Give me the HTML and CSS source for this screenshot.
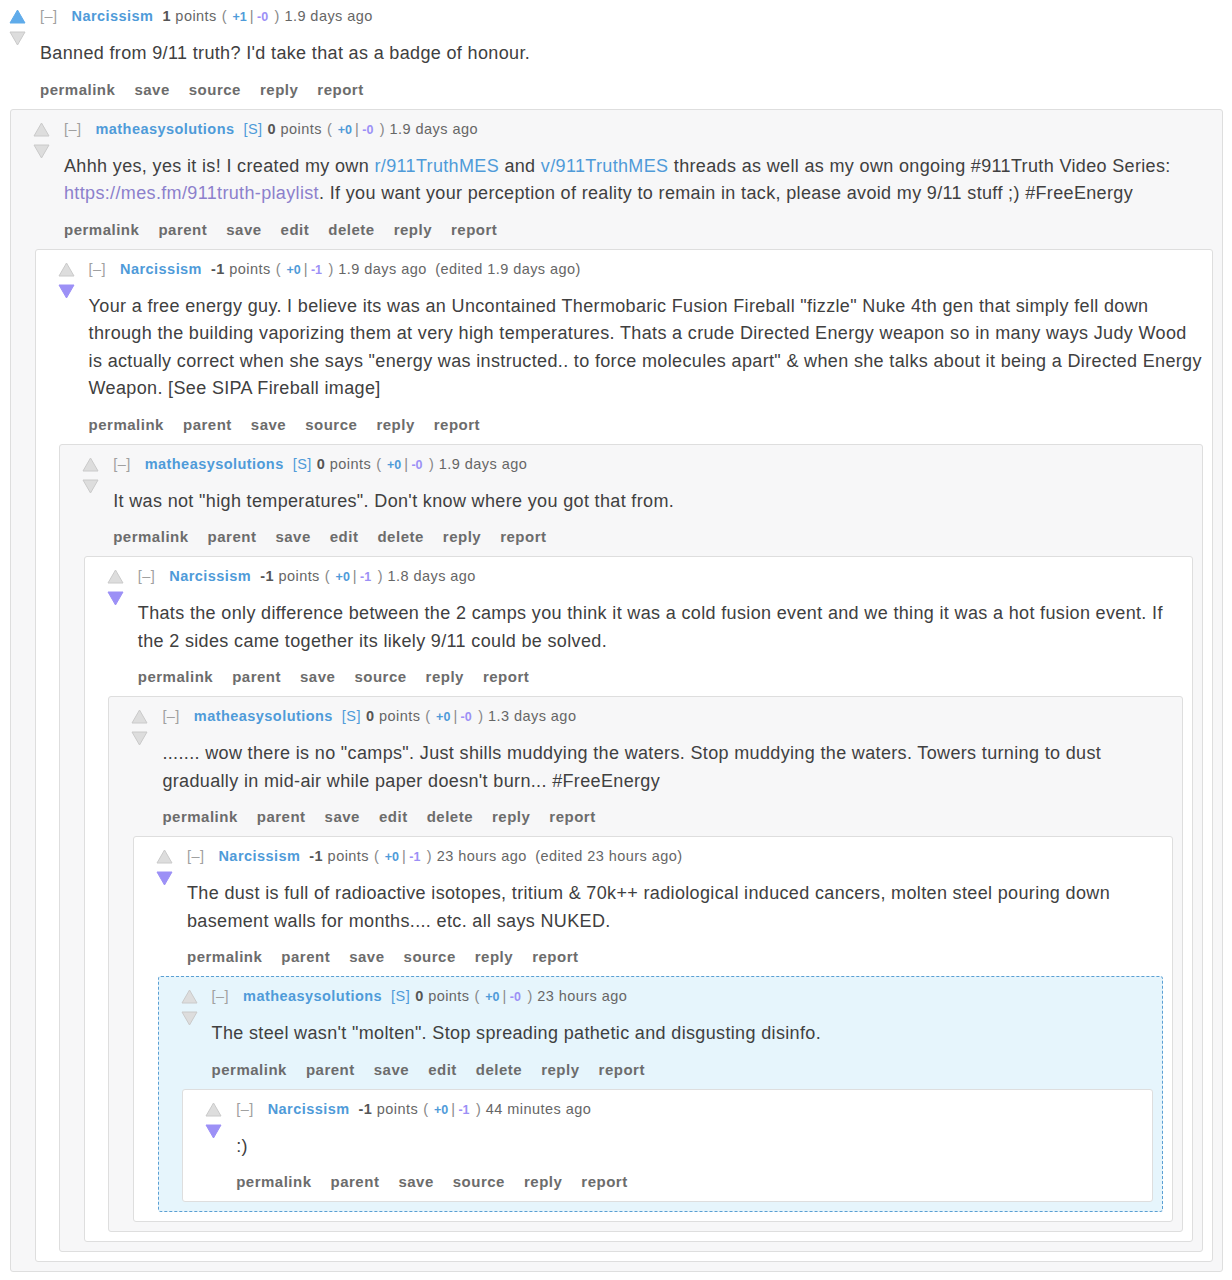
FILE: index.html
```html
<!DOCTYPE html>
<html lang="en">
<head>
    <meta charset="UTF-8">
    <title>Comments</title>
    <link rel="stylesheet" href="styles.css">
</head>
<body>

    <!-- Top level comment -->
    <div class="comment top">
        <div class="entry">
            <div class="midcol">
                <svg class="arrow" viewBox="0 0 17 15"><polygon class="up liked" points="8.5,1 16,14 1,14"/></svg>
                <svg class="arrow" viewBox="0 0 17 15"><polygon class="down" points="1,1 16,1 8.5,14"/></svg>
            </div>
            <div class="main">
                <p class="tagline"><span class="expand">[–]</span><a class="author" href="#">Narcissism</a><span class="score"><b>1</b> points</span><span class="votes">( <span class="plus">+1</span>|<span class="minus">-0</span> )</span> 1.9 days ago</p>
                <div class="md"><p>Banned from 9/11 truth? I'd take that as a badge of honour.</p></div>
                <ul class="buttons"><li>permalink</li><li>save</li><li>source</li><li>reply</li><li>report</li></ul>
            </div>
        </div>

        <div class="comment odd">
            <div class="entry">
                <div class="midcol">
                    <svg class="arrow" viewBox="0 0 17 15"><polygon class="up" points="8.5,1 16,14 1,14"/></svg>
                    <svg class="arrow" viewBox="0 0 17 15"><polygon class="down" points="1,1 16,1 8.5,14"/></svg>
                </div>
                <div class="main">
                    <p class="tagline"><span class="expand">[–]</span><a class="author" href="#">matheasysolutions</a><span class="sub">[S]</span><span class="score"><b>0</b> points</span><span class="votes">( <span class="plus">+0</span>|<span class="minus">-0</span> )</span> 1.9 days ago</p>
                    <div class="md"><p>Ahhh yes, yes it is! I created my own <a href="#">r/911TruthMES</a> and <a href="#">v/911TruthMES</a> threads as well as my own ongoing #911Truth Video Series: <a class="visited" href="#">https://mes.fm/911truth-playlist</a>. If you want your perception of reality to remain in tack, please avoid my 9/11 stuff ;) #FreeEnergy</p></div>
                    <ul class="buttons"><li>permalink</li><li>parent</li><li>save</li><li>edit</li><li>delete</li><li>reply</li><li>report</li></ul>
                </div>
            </div>

            <div class="comment even">
                <div class="entry">
                    <div class="midcol">
                        <svg class="arrow" viewBox="0 0 17 15"><polygon class="up" points="8.5,1 16,14 1,14"/></svg>
                        <svg class="arrow" viewBox="0 0 17 15"><polygon class="down disliked" points="1,1 16,1 8.5,14"/></svg>
                    </div>
                    <div class="main">
                        <p class="tagline"><span class="expand">[–]</span><a class="author" href="#">Narcissism</a><span class="score"><b>-1</b> points</span><span class="votes">( <span class="plus">+0</span>|<span class="minus">-1</span> )</span> 1.9 days ago <span class="edited">(edited 1.9 days ago)</span></p>
                        <div class="md"><p>Your a free energy guy. I believe its was an Uncontained Thermobaric Fusion Fireball "fizzle" Nuke 4th gen that simply fell down through the building vaporizing them at very high temperatures. Thats a crude Directed Energy weapon so in many ways Judy Wood is actually correct when she says "energy was instructed.. to force molecules apart" &amp; when she talks about it being a Directed Energy Weapon. [See SIPA Fireball image]</p></div>
                        <ul class="buttons"><li>permalink</li><li>parent</li><li>save</li><li>source</li><li>reply</li><li>report</li></ul>
                    </div>
                </div>

                <div class="comment odd">
                    <div class="entry">
                        <div class="midcol">
                            <svg class="arrow" viewBox="0 0 17 15"><polygon class="up" points="8.5,1 16,14 1,14"/></svg>
                            <svg class="arrow" viewBox="0 0 17 15"><polygon class="down" points="1,1 16,1 8.5,14"/></svg>
                        </div>
                        <div class="main">
                            <p class="tagline"><span class="expand">[–]</span><a class="author" href="#">matheasysolutions</a><span class="sub">[S]</span><span class="score"><b>0</b> points</span><span class="votes">( <span class="plus">+0</span>|<span class="minus">-0</span> )</span> 1.9 days ago</p>
                            <div class="md"><p>It was not "high temperatures". Don't know where you got that from.</p></div>
                            <ul class="buttons"><li>permalink</li><li>parent</li><li>save</li><li>edit</li><li>delete</li><li>reply</li><li>report</li></ul>
                        </div>
                    </div>

                    <div class="comment even">
                        <div class="entry">
                            <div class="midcol">
                                <svg class="arrow" viewBox="0 0 17 15"><polygon class="up" points="8.5,1 16,14 1,14"/></svg>
                                <svg class="arrow" viewBox="0 0 17 15"><polygon class="down disliked" points="1,1 16,1 8.5,14"/></svg>
                            </div>
                            <div class="main">
                                <p class="tagline"><span class="expand">[–]</span><a class="author" href="#">Narcissism</a><span class="score"><b>-1</b> points</span><span class="votes">( <span class="plus">+0</span>|<span class="minus">-1</span> )</span> 1.8 days ago</p>
                                <div class="md"><p>Thats the only difference between the 2 camps you think it was a cold fusion event and we thing it was a hot fusion event. If the 2 sides came together its likely 9/11 could be solved.</p></div>
                                <ul class="buttons"><li>permalink</li><li>parent</li><li>save</li><li>source</li><li>reply</li><li>report</li></ul>
                            </div>
                        </div>

                        <div class="comment odd">
                            <div class="entry">
                                <div class="midcol">
                                    <svg class="arrow" viewBox="0 0 17 15"><polygon class="up" points="8.5,1 16,14 1,14"/></svg>
                                    <svg class="arrow" viewBox="0 0 17 15"><polygon class="down" points="1,1 16,1 8.5,14"/></svg>
                                </div>
                                <div class="main">
                                    <p class="tagline"><span class="expand">[–]</span><a class="author" href="#">matheasysolutions</a><span class="sub">[S]</span><span class="score"><b>0</b> points</span><span class="votes">( <span class="plus">+0</span>|<span class="minus">-0</span> )</span> 1.3 days ago</p>
                                    <div class="md"><p>....... wow there is no "camps". Just shills muddying the waters. Stop muddying the waters. Towers turning to dust gradually in mid-air while paper doesn't burn... #FreeEnergy</p></div>
                                    <ul class="buttons"><li>permalink</li><li>parent</li><li>save</li><li>edit</li><li>delete</li><li>reply</li><li>report</li></ul>
                                </div>
                            </div>

                            <div class="comment even">
                                <div class="entry">
                                    <div class="midcol">
                                        <svg class="arrow" viewBox="0 0 17 15"><polygon class="up" points="8.5,1 16,14 1,14"/></svg>
                                        <svg class="arrow" viewBox="0 0 17 15"><polygon class="down disliked" points="1,1 16,1 8.5,14"/></svg>
                                    </div>
                                    <div class="main">
                                        <p class="tagline"><span class="expand">[–]</span><a class="author" href="#">Narcissism</a><span class="score"><b>-1</b> points</span><span class="votes">( <span class="plus">+0</span>|<span class="minus">-1</span> )</span> 23 hours ago <span class="edited">(edited 23 hours ago)</span></p>
                                        <div class="md"><p>The dust is full of radioactive isotopes, tritium &amp; 70k++ radiological induced cancers, molten steel pouring down basement walls for months.... etc. all says NUKED.</p></div>
                                        <ul class="buttons"><li>permalink</li><li>parent</li><li>save</li><li>source</li><li>reply</li><li>report</li></ul>
                                    </div>
                                </div>

                                <!-- highlighted comment -->
                                <div class="comment target">
                                    <div class="entry">
                                        <div class="midcol">
                                            <svg class="arrow" viewBox="0 0 17 15"><polygon class="up" points="8.5,1 16,14 1,14"/></svg>
                                            <svg class="arrow" viewBox="0 0 17 15"><polygon class="down" points="1,1 16,1 8.5,14"/></svg>
                                        </div>
                                        <div class="main">
                                            <p class="tagline"><span class="expand">[–]</span><a class="author" href="#">matheasysolutions</a><span class="sub">[S]</span><span class="score"><b>0</b> points</span><span class="votes">( <span class="plus">+0</span>|<span class="minus">-0</span> )</span> 23 hours ago</p>
                                            <div class="md"><p>The steel wasn't "molten". Stop spreading pathetic and disgusting disinfo.</p></div>
                                            <ul class="buttons"><li>permalink</li><li>parent</li><li>save</li><li>edit</li><li>delete</li><li>reply</li><li>report</li></ul>
                                        </div>
                                    </div>

                                    <div class="comment even">
                                        <div class="entry">
                                            <div class="midcol">
                                                <svg class="arrow" viewBox="0 0 17 15"><polygon class="up" points="8.5,1 16,14 1,14"/></svg>
                                                <svg class="arrow" viewBox="0 0 17 15"><polygon class="down disliked" points="1,1 16,1 8.5,14"/></svg>
                                            </div>
                                            <div class="main">
                                                <p class="tagline"><span class="expand">[–]</span><a class="author" href="#">Narcissism</a><span class="score"><b>-1</b> points</span><span class="votes">( <span class="plus">+0</span>|<span class="minus">-1</span> )</span> 44 minutes ago</p>
                                                <div class="md"><p>:)</p></div>
                                                <ul class="buttons"><li>permalink</li><li>parent</li><li>save</li><li>source</li><li>reply</li><li>report</li></ul>
                                            </div>
                                        </div>
                                    </div>
                                </div>
                            </div>
                        </div>
                    </div>
                </div>
            </div>
        </div>
    </div>

</body>
</html>
```

FILE: styles.css
```css
/* General styles */
* {
    box-sizing: border-box;
    margin: 0;
    padding: 0;
}

body {
    font-family: "Liberation Sans", Arial, sans-serif;
    background: #ffffff;
    color: #404040;
}

a {
    text-decoration: none;
}

/* Comment boxes */
.comment {
    border: 1px solid #dedede;
    border-radius: 3px;
    padding: 9px 0 9px 0;
    margin: 9px 9px 0 23.6px;
}

.comment.top {
    border: none;
    margin: 0;
    padding: 6px 0 0 0;
    background: none;
}

.comment.top > .entry {
    padding-left: 9px;
}

.comment.top > .comment {
    margin: 9px 9px 0 10px;
}

.comment.odd {
    background-color: #f7f7f8;
}

.comment.even {
    background-color: #ffffff;
}

.comment.target {
    background-color: #e6f5fc;
    border: 1px dashed #5b9fd3;
}

.entry {
    display: flex;
    padding-left: 22px;
}

/* Vote arrows */
.midcol {
    width: 31px;
    flex-shrink: 0;
    padding-top: 3px;
    display: flex;
    flex-direction: column;
    gap: 7px;
}

.arrow {
    width: 17px;
    height: 15px;
    display: block;
}

.arrow polygon {
    fill: #dddddd;
    stroke: #cacaca;
    stroke-width: 1;
    stroke-linejoin: round;
}

.arrow polygon.liked {
    fill: #5fabea;
    stroke: #5fabea;
}

.arrow polygon.disliked {
    fill: #9c90f6;
    stroke: #9c90f6;
}

/* Text column */
.main {
    flex: 1;
    padding-right: 9px;
    min-width: 0;
}

.tagline {
    font-size: 14.5px;
    line-height: 20px;
    letter-spacing: 0.45px;
    color: #666666;
    white-space: nowrap;
}

.expand {
    color: #a0a0a0;
    margin-right: 14px;
}

.author {
    color: #4f9bd9;
    font-weight: bold;
    margin-right: 9px;
}

.sub {
    color: #4f9bd9;
    margin-right: 5px;
}

.score {
    margin-right: 5px;
}

.score b {
    color: #555555;
}

.votes {
    color: #888888;
}

.plus,
.minus {
    font-size: 12.5px;
    font-weight: bold;
    letter-spacing: 0;
}

.plus {
    color: #4f9bd9;
    margin: 0 3px 0 1px;
}

.minus {
    color: #9c90f6;
    margin: 0 2px 0 3px;
}

.edited {
    margin-left: 4px;
}

.md {
    margin-top: 13px;
    font-size: 18px;
    line-height: 27.5px;
    letter-spacing: 0.35px;
    color: #404040;
}

.md a {
    color: #4f9bd9;
}

.md a.visited {
    color: #8c80cc;
}

.buttons {
    list-style: none;
    display: flex;
    gap: 19px;
    margin-top: 12px;
    font-size: 15px;
    line-height: 20px;
    letter-spacing: 0.5px;
    font-weight: bold;
    color: #6c6c6c;
}
```
